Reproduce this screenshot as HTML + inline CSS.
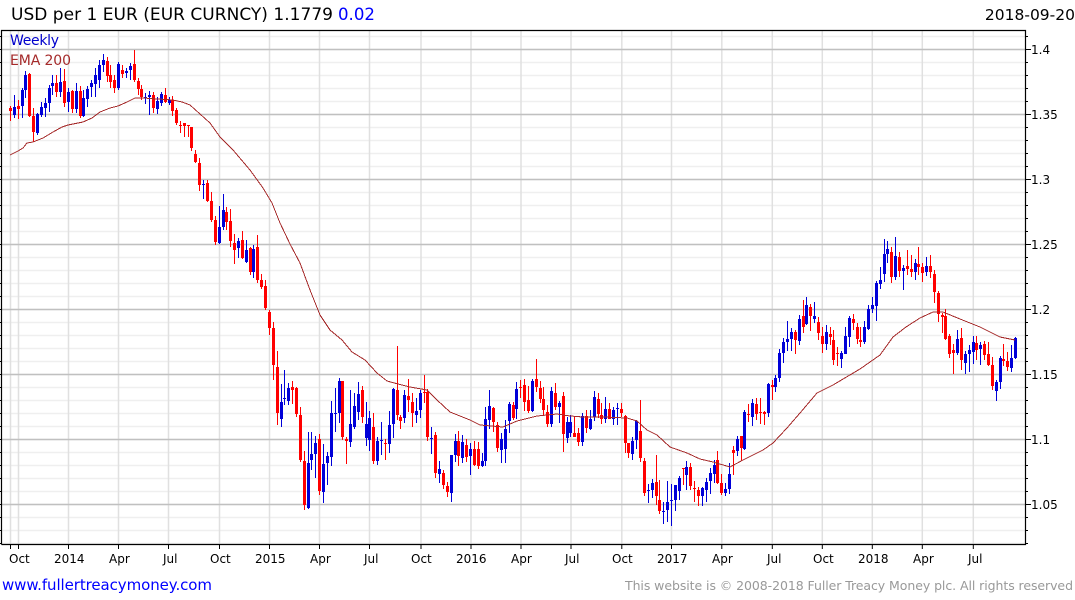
<!DOCTYPE html>
<html>
<head>
<meta charset="utf-8">
<style>
html,body{margin:0;padding:0;background:#fff;width:1075px;height:600px;overflow:hidden}
svg{display:block}
text{font-family:"DejaVu Sans",sans-serif}
</style>
</head>
<body>
<svg id="c" xmlns="http://www.w3.org/2000/svg" width="1075" height="600" viewBox="0 0 1075 600">
<g id="minor"></g>
<g id="vert"></g>
<g id="major"></g>
<g id="candles"></g>
<polyline fill="none" stroke="#a52a2a" stroke-width="1" shape-rendering="crispEdges" points="10,155 18,151 23,148 27,143 33,142 43,138 53,132 62,127 68,125 83,122 92,118 100,112 110,108 118,106 127,102 135,98 143,98 173,100 182,102 190,105 200,114 210,123 220,137 233,150 250,170 263,188 272,203 280,223 290,244 300,263 310,290 320,315 330,330 342,340 352,352 365,360 377,373 387,381 398,384 410,387 427,390 437,400 450,412 470,420 480,425 503,427 517,421 537,416 557,414 570,416 583,417 603,417 627,418 637,421 647,430 657,435 670,447 687,453 700,459 713,462 730,467 743,460 763,450 773,443 787,428 800,413 817,393 833,385 860,369 880,355 893,337 906,327 920,318 933,312 943,312 960,319 980,327 1000,337 1015,340"/>
<g id="ticks" stroke="#000" stroke-width="1"></g>
<path d="M1.5 544.5V30.5H1025.5V544.5H1.5" fill="none" stroke="#000" stroke-width="1.2"/>
<text x="11" y="20" font-size="17" fill="#000" textLength="322" lengthAdjust="spacing">USD per 1 EUR (EUR CURNCY) 1.1779</text>
<text x="338" y="20" font-size="16.6" fill="#0000ff">0.02</text>
<text x="1075" y="20" font-size="15.5" fill="#000" text-anchor="end">2018-09-20</text>
<text x="10" y="45" font-size="14" fill="#0000cc" textLength="49" lengthAdjust="spacing">Weekly</text>
<text x="10" y="65" font-size="14" fill="#a52a2a" textLength="61" lengthAdjust="spacing">EMA 200</text>
<g font-size="12" fill="#000">
<text x="1031" y="54">1.4</text><text x="1031" y="119">1.35</text><text x="1031" y="184">1.3</text><text x="1031" y="249">1.25</text><text x="1031" y="314">1.2</text><text x="1031" y="379">1.15</text><text x="1031" y="444">1.1</text><text x="1031" y="509">1.05</text>
<text x="9" y="563">Oct</text><text x="54" y="563">2014</text><text x="109" y="563">Apr</text><text x="163" y="563">Jul</text><text x="210" y="563">Oct</text><text x="255" y="563">2015</text><text x="310" y="563">Apr</text><text x="364" y="563">Jul</text><text x="411" y="563">Oct</text><text x="456" y="563">2016</text><text x="511" y="563">Apr</text><text x="565" y="563">Jul</text><text x="612" y="563">Oct</text><text x="657" y="563">2017</text><text x="712" y="563">Apr</text><text x="767" y="563">Jul</text><text x="813" y="563">Oct</text><text x="858" y="563">2018</text><text x="913" y="563">Apr</text><text x="968" y="563">Jul</text>
</g>
<text x="2" y="590" font-size="15" fill="#0000ff" textLength="210" lengthAdjust="spacing">www.fullertreacymoney.com</text>
<text x="625" y="590" font-size="12.5" fill="#999" textLength="448" lengthAdjust="spacing">This website is © 2008-2018 Fuller Treacy Money plc. All rights reserved</text>
</svg>
<script>
var NS="http://www.w3.org/2000/svg";
function el(p,t,a){var e=document.createElementNS(NS,t);for(var k in a)e.setAttribute(k,a[k]);document.getElementById(p).appendChild(e);}
var y;
for(y=36.5;y<544;y+=13){el("minor","line",{x1:2,x2:1025,y1:y,y2:y,stroke:"#efefef","stroke-width":1.5});}
[10.5,18.5,68.5,118.5,168.5,219.5,269.5,319.5,369.5,421,471,521,571,621.8,671.5,721.8,772.3,822.3,872.3,922.3,973.3].forEach(function(x){
 el("vert","line",{x1:x,x2:x,y1:31,y2:544,stroke:"#e0e0e0","stroke-width":1.5});
 el("ticks","line",{x1:x,x2:x,y1:544,y2:549});
});
[49.5,114.5,179.5,244.5,309.5,374.5,439.5,504.5].forEach(function(v){
 el("major","line",{x1:2,x2:1025,y1:v,y2:v,stroke:"#c0c0c0","stroke-width":1.5});
});
for(y=36.5;y<544;y+=13){
 var mj=Math.abs(((y-49.5)%65))<0.1;
 el("ticks","line",{x1:1025,x2:mj?1031:1028,y1:y,y2:y});
 el("ticks","line",{x1:0,x2:1.5,y1:y,y2:y});
}
var d="r10 106 121 108 111,b14 95 118 107 115,r18 100 119 106 109,b22 88 118 90 106,b25 71 98 75 90,r29 73 117 74 116,r33 108 142 116 132,b37 113 135 114 133,b41 102 117 107 115,b45 98 117 103 108,b49 85 112 88 103,b52 75 95 83 86,r56 75 97 83 92,b60 68 97 82 92,r64 69 107 81 103,b68 88 112 92 102,r72 90 113 91 109,b76 83 113 91 109,r80 86 118 91 116,b83 90 117 98 116,b87 86 107 89 99,b91 80 97 83 87,b95 68 97 75 84,b99 60 88 65 80,b103 54 72 60 65,r107 57 82 61 76,r110 65 88 75 82,r114 75 93 80 88,b118 62 90 64 88,r122 65 78 70 74,b126 68 78 71 73,b130 63 80 66 70,r134 50 82 64 80,r138 78 95 81 89,r141 85 100 89 97,b145 93 104 97 98,b149 91 115 95 97,r153 92 113 95 108,b157 97 114 101 109,b161 92 106 94 103,r165 88 103 95 102,b169 97 105 100 103,r172 96 116 100 111,r176 108 125 110 123,r180 121 133 125 125,r184 123 137 123 126,r188 125 137 125 126,r191 127 151 127 148,r195 150 163 154 162,r199 158 191 163 185,b203 180 199 184 185,r207 180 202 183 201,r211 192 222 201 220,r215 216 245 220 242,b219 206 244 227 243,b223 194 230 210 227,r226 207 230 212 222,r230 209 247 221 241,r234 234 264 243 250,b238 238 258 241 248,r242 231 259 240 258,b246 240 263 250 262,r250 247 275 248 272,b253 245 278 249 272,r257 235 283 247 280,r261 274 289 280 287,r265 280 310 286 308,r269 310 335 312 328,r273 322 380 328 365,r277 351 425 367 413,b281 384 427 402 419,b284 370 405 398 399,b288 383 405 388 401,r292 381 404 387 390,r296 387 417 388 414,r300 407 462 415 460,r304 451 510 461 505,b308 432 509 463 508,b311 432 470 454 460,b315 436 478 443 454,r319 434 495 439 491,b323 444 503 464 492,b327 452 485 456 463,b331 401 466 413 457,b335 388 432 413 414,b339 378 423 381 413,r342 381 440 381 437,r346 437 464 439 441,b350 390 447 424 442,b354 393 429 406 427,b358 382 420 394 412,r362 386 423 390 417,b366 402 446 424 438,b369 411 451 418 440,r373 413 464 427 461,b377 437 465 441 461,b381 422 455 440 441,r385 439 460 443 444,b389 411 453 425 444,b393 388 438 389 424,r397 346 420 390 415,r400 415 429 417 421,b404 390 423 395 418,r408 379 412 396 400,r412 393 427 402 413,b416 398 423 411 415,b420 390 418 393 410,r424 375 403 392 393,r427 389 441 392 437,b431 427 454 438 439,r435 432 478 435 473,b439 461 483 469 474,r443 470 489 473 485,r447 482 497 486 492,b451 455 502 455 493,b455 434 462 441 455,r458 431 466 441 456,b462 435 463 442 458,r466 439 462 445 457,b470 443 475 449 456,r474 441 466 449 465,r478 442 469 449 466,b482 453 467 461 466,b485 407 466 419 461,b489 390 429 406 420,r493 407 432 408 422,r497 422 452 425 448,b501 433 463 439 450,b505 420 463 429 449,b509 402 433 404 421,r513 402 420 405 418,b516 382 419 389 409,r520 380 398 387 388,r524 379 411 385 402,r528 386 413 400 411,b532 379 412 381 411,r536 359 392 379 387,r540 381 403 388 399,r543 387 416 399 410,r547 405 427 412 424,b551 387 427 391 424,r555 383 410 393 407,b559 401 423 403 407,r563 392 452 396 434,b567 417 443 422 438,b570 415 437 422 433,r574 416 437 433 437,r578 428 446 433 442,b582 413 446 416 442,r586 410 433 416 428,b590 410 430 419 429,b594 391 421 397 417,r598 393 418 399 414,r601 403 424 415 419,b605 397 423 409 419,r609 403 418 409 419,b613 407 425 410 419,b617 403 425 408 409,r621 403 417 409 413,r625 415 453 416 443,r628 443 458 443 453,b632 437 460 441 454,b636 420 449 421 440,r640 400 462 431 458,r644 458 496 461 493,b648 484 503 490 491,b652 479 498 483 490,r656 455 505 482 496,r659 480 514 500 511,b663 502 524 511 512,b667 481 522 502 510,b671 484 526 500 501,b675 485 511 485 500,b679 476 500 478 491,r683 468 485 468 469,b686 461 490 467 475,r690 463 490 467 486,r694 481 502 488 489,r698 487 506 490 496,b702 487 506 488 496,b706 478 502 482 490,b710 468 494 473 481,b714 460 483 465 474,r717 451 484 460 483,r721 474 495 483 493,b725 483 496 489 493,b729 463 494 474 489,r733 446 475 450 453,b737 436 456 439 451,r741 436 461 436 448,b744 410 450 412 449,r748 404 422 414 415,b752 399 426 403 417,r756 398 420 404 414,r760 398 424 412 413,r764 411 425 412 414,b768 383 417 384 413,r772 380 400 385 387,b775 375 392 378 387,b779 349 382 353 378,b783 338 363 342 353,b787 321 351 339 342,b791 328 351 332 339,r795 330 354 332 340,b799 315 345 319 341,r803 300 333 316 327,b806 297 325 305 324,r810 304 331 307 316,b814 302 323 316 319,r818 317 340 322 333,r822 327 353 336 344,b826 325 350 332 344,r830 327 345 334 337,r833 330 365 340 360,r837 347 366 353 354,b841 351 368 353 359,b845 327 354 336 354,b849 316 347 318 337,r853 314 330 319 323,r857 323 344 327 339,r860 327 347 340 342,b864 321 344 327 342,b868 305 330 309 329,b872 297 313 305 309,b876 281 321 283 306,b880 267 289 280 284,b884 239 282 254 274,b887 241 263 249 254,r891 247 283 252 277,b895 237 280 256 277,r899 252 277 257 271,b903 265 290 268 271,r907 250 275 266 269,r911 255 277 269 272,b915 259 280 263 272,r918 247 275 264 267,r922 263 282 267 273,b926 257 276 266 272,r930 255 278 266 272,r934 270 303 274 292,r938 291 322 293 314,r942 313 333 315 317,r945 309 340 316 339,r949 334 358 336 354,r953 344 374 350 353,b957 330 355 339 353,r961 328 370 338 360,b965 351 374 354 363,b969 345 372 350 354,b973 336 364 342 352,r976 336 360 343 350,b980 342 365 345 349,r984 341 360 344 355,r988 342 366 354 365,r992 357 390 365 386,b996 380 401 382 391,b1000 356 389 358 382,r1003 344 366 359 361,r1007 352 371 361 367,b1011 345 372 358 368,b1015 337 359 338 358".split(",");
d.forEach(function(s){
 var col=s[0]=="r"?"#ff0000":"#0000d8";
 var v=s.slice(1).split(" ").map(Number);
 el("candles","rect",{x:v[0],y:v[1],width:1,height:v[2]-v[1],fill:col});
 el("candles","rect",{x:v[0]-1,y:v[3],width:3,height:Math.max(1,v[4]-v[3]),fill:col});
});
</script>
</body>
</html>
